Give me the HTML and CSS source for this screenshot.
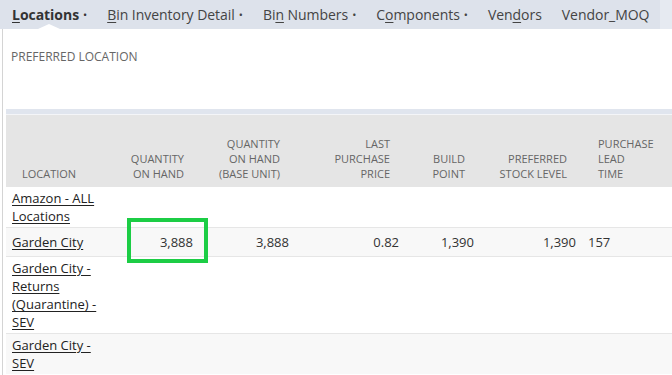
FILE: index.html
```html
<!DOCTYPE html>
<html lang="en">
<head>
    <meta charset="UTF-8">
    <meta name="viewport" content="width=device-width, initial-scale=1.0">
    <title>Item Locations</title>
    <link rel="stylesheet" href="styles.css">
</head>
<body>

<div class="tab-strip">
    <div class="tabs">
        <a class="tab active"><u>L</u>ocations<span class="dot">&bull;</span></a>
        <a class="tab"><u>B</u>in Inventory Detail<span class="dot">&bull;</span></a>
        <a class="tab">Bi<u>n</u> Numbers<span class="dot">&bull;</span></a>
        <a class="tab">C<u>o</u>mponents<span class="dot">&bull;</span></a>
        <a class="tab">Ven<u>d</u>ors</a>
        <a class="tab">Vendor_MOQ</a>
    </div>
</div>

<div class="panel">
    <div class="field-label">Preferred Location</div>

    <div class="band"></div>
    <table class="grid">
        <colgroup>
            <col style="width: 112px">
            <col style="width: 81px">
            <col style="width: 96px">
            <col style="width: 110px">
            <col style="width: 75px">
            <col style="width: 102px">
            <col style="width: 88px">
            <col style="width: 120px">
        </colgroup>
        <tr class="head">
            <th class="left">Location</th>
            <th>Quantity<br>on hand</th>
            <th>Quantity<br>on hand<br>(base unit)</th>
            <th>Last<br>purchase<br>price</th>
            <th>Build<br>point</th>
            <th>Preferred<br>stock level</th>
            <th class="left">Purchase<br>lead<br>time</th>
            <th class="left"></th>
        </tr>
        <tr>
            <td class="loc"><a href="#">Amazon - ALL Locations</a></td>
            <td></td><td></td><td></td><td></td><td></td><td class="left"></td><td></td>
        </tr>
        <tr class="alt">
            <td class="loc"><a href="#">Garden City</a></td>
            <td class="marked">3,888<span class="mark"></span></td>
            <td>3,888</td>
            <td>0.82</td>
            <td>1,390</td>
            <td>1,390</td>
            <td class="left">157</td>
            <td></td>
        </tr>
        <tr>
            <td class="loc"><a href="#">Garden City - Returns (Quarantine) - SEV</a></td>
            <td></td><td></td><td></td><td></td><td></td><td class="left"></td><td></td>
        </tr>
        <tr class="alt">
            <td class="loc"><a href="#">Garden City - SEV</a></td>
            <td></td><td></td><td></td><td></td><td></td><td class="left"></td><td></td>
        </tr>
    </table>
</div>

</body>
</html>
```

FILE: styles.css
```css
html, body {
    overflow: hidden;
}
body {
    margin: 0;
    font-family: "Open Sans", Arial, sans-serif;
    color: #333;
    background-color: #fff;
}
.tab-strip {
    background-color: #e6eaf1;
    height: 29px;
}
.tabs {
    display: flex;
    width: 660px;
    height: 29px;
    padding-left: 12px;
    gap: 20px;
    box-sizing: border-box;
    background-color: #dde2eb;
}
.tab {
    position: relative;
    font-size: 14px;
    line-height: 29px;
    color: #444;
    text-decoration: none;
    white-space: nowrap;
    letter-spacing: -0.04px;
}
.tab u {
    text-underline-offset: 2px;
}
.tab.active {
    font-weight: bold;
    color: #333;
}
.tab.active::after {
    content: "";
    position: absolute;
    left: 26px;
    bottom: 0;
    border-left: 11px solid transparent;
    border-right: 11px solid transparent;
    border-bottom: 5px solid #fff;
}
.dot {
    font-size: 11px;
    font-weight: normal;
    margin-left: 4px;
    vertical-align: 1px;
}
.panel {
    margin-left: 2px;
    border-left: 1px solid #d4d4d4;
    padding-left: 3px;
    min-height: 400px;
}
.field-label {
    padding: 20px 0 0 5px;
    font-size: 12px;
    line-height: 16px;
    color: #666;
    text-transform: uppercase;
}
.band {
    margin-top: 44px;
    height: 5px;
    border-bottom: 1px solid #f4f5f8;
    background-color: #e0e5ee;
    width: 800px;
}
.grid {
    border-collapse: collapse;
    table-layout: fixed;
    width: 784px;
}
.grid .head {
    height: 72px;
    background-color: #e5e5e5;
}
.grid th {
    vertical-align: bottom;
    padding: 0 15px 6px 6px;
    font-size: 11px;
    line-height: 15px;
    font-weight: normal;
    color: #666;
    text-transform: uppercase;
    text-align: right;
}
.grid th.left {
    text-align: left;
    padding-left: 16px;
}
.grid td {
    padding: 5px 6px;
    font-size: 13px;
    line-height: 18px;
    text-align: right;
    vertical-align: middle;
    border-top: 1px solid #e6e6e6;
    color: #333;
}
.grid tr:nth-child(2) td {
    border-top: none;
}
.grid td.left {
    text-align: left;
}
.grid td.loc {
    text-align: left;
    padding: 2px 6px;
}
.grid td.loc a {
    color: #222;
    text-decoration: underline;
    text-underline-offset: 2px;
}
.grid tr.alt td {
    background-color: #f8f8f8;
}
.marked {
    position: relative;
}
.mark {
    position: absolute;
    left: 9px;
    top: -10px;
    width: 81px;
    height: 45px;
    box-sizing: border-box;
    border: 4px solid #1ccd45;
}
```
